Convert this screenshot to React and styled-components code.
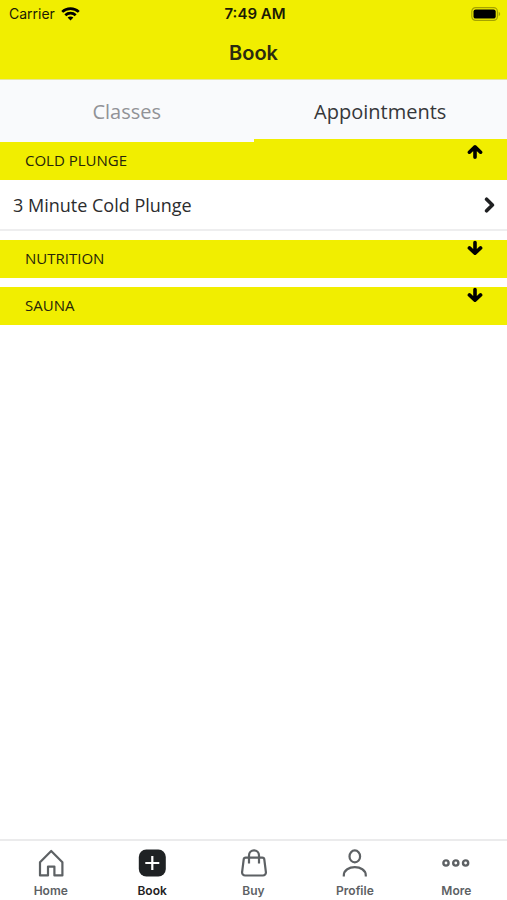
import React, { useState } from "react";
import styled, { createGlobalStyle } from "styled-components";

const GlobalStyle = createGlobalStyle`
  * {
    box-sizing: border-box;
  }

  body {
    margin: 0;
    background: #fff;
    font-family: "Open Sans", sans-serif;
    color: #2b2c2e;
  }

  button {
    margin: 0;
    border: 0;
    font: inherit;
    color: inherit;
    cursor: pointer;
  }
`;

const Page = styled.div`
  display: flex;
  flex-direction: column;
  min-height: 100vh;
`;

// Header
const Header = styled.header`
  background: #f1ee00;
  border-bottom: 1px solid #e6e69a;
  font-family: Inter, sans-serif;
`;

const StatusBar = styled.div`
  display: grid;
  grid-template-columns: 1fr auto 1fr;
  align-items: center;
  height: 27px;
  padding: 0 6px 0 9px;
  font-size: 14px;
  color: #1b1b05;
`;

const Carrier = styled.span`
  display: flex;
  align-items: center;
  gap: 6px;
`;

const Time = styled.span`
  font-size: 15px;
  font-weight: 600;
`;

const BatteryIcon = styled.svg`
  justify-self: end;
`;

const Title = styled.h1`
  margin: 0;
  height: 52px;
  line-height: 52px;
  text-align: center;
  font-size: 20px;
  font-weight: 600;
  color: #2b2b10;
`;

// Tabs
const Tabs = styled.div`
  display: flex;
  background: #f9fafc;
`;

const Tab = styled.button`
  flex: 1;
  height: 62px;
  padding: 3px 0 0;
  background: none;
  border-bottom: 3px solid ${(p) => (p.$active ? "#f1ee00" : "transparent")};
  font-size: 20px;
  color: ${(p) => (p.$active ? "#36373a" : "#919297")};
`;

// List
const List = styled.main`
  flex: 1;
  display: flex;
  flex-direction: column;
  gap: 9px;
`;

const SectionButton = styled.button`
  display: flex;
  justify-content: space-between;
  align-items: flex-start;
  width: 100%;
  height: 38px;
  padding: 0 24px 0 25px;
  background: #f1ee00;
  font-size: 15px;
  line-height: 36px;
  text-align: left;
  text-transform: uppercase;
  color: #26250a;
`;

const SectionArrow = styled.span`
  display: flex;
  padding-top: ${(p) => (p.$open ? 1 : 0)}px;
`;

const Row = styled.button`
  display: flex;
  justify-content: space-between;
  align-items: center;
  width: 100%;
  height: 51px;
  padding: 0 10px 0 13px;
  background: #fff;
  border-bottom: 2px solid #eeeeef;
  font-size: 18px;
  text-align: left;
`;

// Bottom navigation
const Nav = styled.nav`
  position: sticky;
  bottom: 0;
  display: flex;
  height: 61px;
  background: #fff;
  border-top: 2px solid #ebebec;
`;

const NavItem = styled.a`
  flex: 1;
  display: flex;
  flex-direction: column;
  align-items: center;
  gap: 6px;
  padding-top: 8px;
  font: 600 12px/16px Inter, sans-serif;
  color: ${(p) => (p.$active ? "#1f2224" : "#5d6164")};
  text-decoration: none;
`;

const Wifi = () => (
  <svg width="19" height="14" viewBox="0 0 19 14" aria-hidden="true">
    <g fill="none" stroke="#000" strokeWidth="2.7">
      <path d="M1.2 4.9C5.8.4 13.2.4 17.8 4.9" />
      <path d="M4.3 8.3c2.9-2.8 7.5-2.8 10.4 0" />
    </g>
    <path d="M9.5 13.4l-2.9-2.9c1.6-1.4 4.2-1.4 5.8 0z" />
  </svg>
);

const Battery = () => (
  <BatteryIcon width="30" height="14" viewBox="0 0 30 14" aria-hidden="true">
    <rect
      x="0.8"
      y="0.6"
      width="25.6"
      height="12.8"
      rx="3.8"
      fill="none"
      stroke="#a5a300"
      strokeWidth="1.2"
    />
    <rect x="2.5" y="2.4" width="22.2" height="9.2" rx="2.2" />
    <path d="M27.7 4.8c2 .8 2 3.6 0 4.4z" fill="#a5a300" />
  </BatteryIcon>
);

const Arrow = ({ up }) => (
  <svg width="16" height="16" viewBox="0 0 16 16" aria-hidden="true">
    <path
      d={up ? "M8 14.2V4.4M2.4 9.2L8 3.9l5.6 5.3" : "M8 2.6V12.6M2.4 7.9L8 13.2l5.6-5.3"}
      fill="none"
      stroke="#000"
      strokeWidth="3.6"
      strokeLinecap="round"
      strokeLinejoin="round"
    />
  </svg>
);

const Chevron = () => (
  <svg width="14" height="16" viewBox="0 0 14 16" aria-hidden="true">
    <path
      d="M3.6 2.2L9.4 8l-5.8 5.8"
      fill="none"
      stroke="#1f2022"
      strokeWidth="3.6"
      strokeLinecap="round"
      strokeLinejoin="round"
    />
  </svg>
);

const NavIcon = ({ children }) => (
  <svg
    width="28"
    height="28"
    viewBox="0 0 28 28"
    fill="none"
    stroke="currentColor"
    strokeWidth="2.2"
    aria-hidden="true"
  >
    {children}
  </svg>
);

const navItems = [
  {
    name: "Home",
    icon: (
      <path d="M14.2 2L3 13.2v13.2h8v-8.8h6.4v8.8h8V13.2z" strokeLinejoin="round" />
    ),
  },
  {
    name: "Book",
    icon: (
      <>
        <rect x="0.8" y="0.5" width="27" height="27" rx="7.5" fill="currentColor" stroke="none" />
        <path d="M14.3 7v14M7.3 14h14" stroke="#fff" />
      </>
    ),
  },
  {
    name: "Buy",
    icon: (
      <>
        <path d="M5.7 8.6h16.6a2 2 0 0 1 2 1.8l1.6 12.8a3 3 0 0 1-3 3.3H5.1a3 3 0 0 1-3-3.3l1.6-12.8a2 2 0 0 1 2-1.8z" />
        <path d="M9 14.5V6.4a5 5 0 0 1 10 0v8.1" />
      </>
    ),
  },
  {
    name: "Profile",
    icon: (
      <>
        <ellipse cx="13.8" cy="7.4" rx="5.3" ry="6" />
        <path d="M2.8 27.6V26.4c0-11 22-11 22 0v1.2" />
      </>
    ),
  },
  {
    name: "More",
    icon: (
      <g strokeWidth="2.4">
        <circle cx="4" cy="14" r="2.6" />
        <circle cx="13.8" cy="14" r="2.6" />
        <circle cx="23.6" cy="14" r="2.6" />
      </g>
    ),
  },
];

const sections = [
  { name: "Cold Plunge", items: ["3 Minute Cold Plunge"] },
  { name: "Nutrition", items: [] },
  { name: "Sauna", items: [] },
];

const App = () => {
  const [tab, setTab] = useState("Appointments");
  const [open, setOpen] = useState("Cold Plunge");

  return (
    <>
      <GlobalStyle />
      <Page>
        <Header>
          <StatusBar>
            <Carrier>
              Carrier
              <Wifi />
            </Carrier>
            <Time>7:49 AM</Time>
            <Battery />
          </StatusBar>
          <Title>Book</Title>
        </Header>
        <Tabs role="tablist">
          {["Classes", "Appointments"].map((name) => (
            <Tab
              key={name}
              type="button"
              role="tab"
              aria-selected={tab === name}
              $active={tab === name}
              onClick={() => setTab(name)}
            >
              {name}
            </Tab>
          ))}
        </Tabs>
        <List>
          {sections.map(({ name, items }) => {
            const isOpen = open === name;
            return (
              <section key={name}>
                <SectionButton
                  type="button"
                  aria-expanded={isOpen}
                  onClick={() => setOpen(isOpen ? "" : name)}
                >
                  {name}
                  <SectionArrow $open={isOpen}>
                    <Arrow up={isOpen} />
                  </SectionArrow>
                </SectionButton>
                {isOpen &&
                  items.map((item) => (
                    <Row key={item} type="button">
                      {item}
                      <Chevron />
                    </Row>
                  ))}
              </section>
            );
          })}
        </List>
        <Nav>
          {navItems.map(({ name, icon }) => (
            <NavItem key={name} href={`#${name.toLowerCase()}`} $active={name === "Book"}>
              <NavIcon>{icon}</NavIcon>
              {name}
            </NavItem>
          ))}
        </Nav>
      </Page>
    </>
  );
};

export default App;
